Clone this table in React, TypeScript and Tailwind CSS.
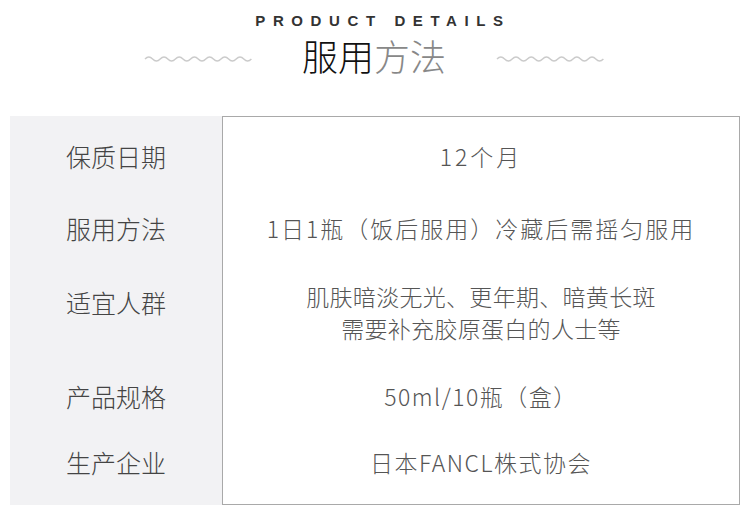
const rows = [
  { label: "保质日期", value: ["12个月"], h: "h-[80px]", track: "tracking-[3px]" },
  { label: "服用方法", value: ["1日1瓶（饭后服用）冷藏后需摇匀服用"], h: "h-[64px]", track: "tracking-[2px]" },
  {
    label: "适宜人群",
    value: ["肌肤暗淡无光、更年期、暗黄长斑", "需要补充胶原蛋白的人士等"],
    h: "h-[113px]",
    track: "tracking-[0.3px]",
    top: true,
  },
  { label: "产品规格", value: ["50ml/10瓶（盒）"], h: "h-[46px]", track: "tracking-[1.5px]" },
  { label: "生产企业", value: ["日本FANCL株式协会"], h: "h-[85px]", track: "tracking-[1.5px]" },
];

function Wave() {
  let d = "M1 4";
  for (let i = 0; i < 7; i++) d += " q 3.8 -4 7.6 0 t 7.6 0";
  return (
    <svg width="108" height="8" viewBox="0 0 108 8" className="shrink-0 mt-[8px]">
      <path d={d} fill="none" stroke="#cbcbcb" strokeWidth="1.4" />
    </svg>
  );
}

export default function App() {
  return (
    <div className="w-[748px] h-[511px] bg-white font-['Noto_Sans_CJK_SC',sans-serif]">
      <div className="pt-[13px] text-center text-[15px] leading-[15px] font-bold tracking-[7.6px] text-[#333] pl-[18px] font-['Liberation_Sans',sans-serif]">
        PRODUCT DETAILS
      </div>
      <div className="mt-[9px] flex items-center justify-center gap-[50px] h-[36px]">
        <Wave />
        <div className="text-[36px] leading-[36px] font-light">
          <span className="text-[#111]">服用</span>
          <span className="text-[#888]">方法</span>
        </div>
        <Wave />
      </div>

      <div className="mt-[43px] ml-[10px] flex w-[730px]">
        <div className="w-[212px] bg-[#f2f2f4] flex flex-col">
          {rows.map((r) => (
            <div
              key={r.label}
              className={`${r.h} flex justify-center ${r.top ? "items-start pt-[26px]" : "items-center"}`}
            >
              <span className="text-[25px] leading-[32px] font-light text-[#444]">{r.label}</span>
            </div>
          ))}
        </div>
        <div className="flex-1 border border-[#a9a9a9] bg-white flex flex-col">
          {rows.map((r, i) => (
            <div
              key={r.label}
              className={`${r.h} ${i === 0 ? "-mt-px" : ""} flex flex-col items-center ${r.top ? "justify-start pt-[20px]" : "justify-center"}`}
            >
              {r.value.map((v) => (
                <span key={v} className={`text-[23px] leading-[32px] font-light text-[#555] ${r.track}`}>
                  {v}
                </span>
              ))}
            </div>
          ))}
        </div>
      </div>
    </div>
  );
}
